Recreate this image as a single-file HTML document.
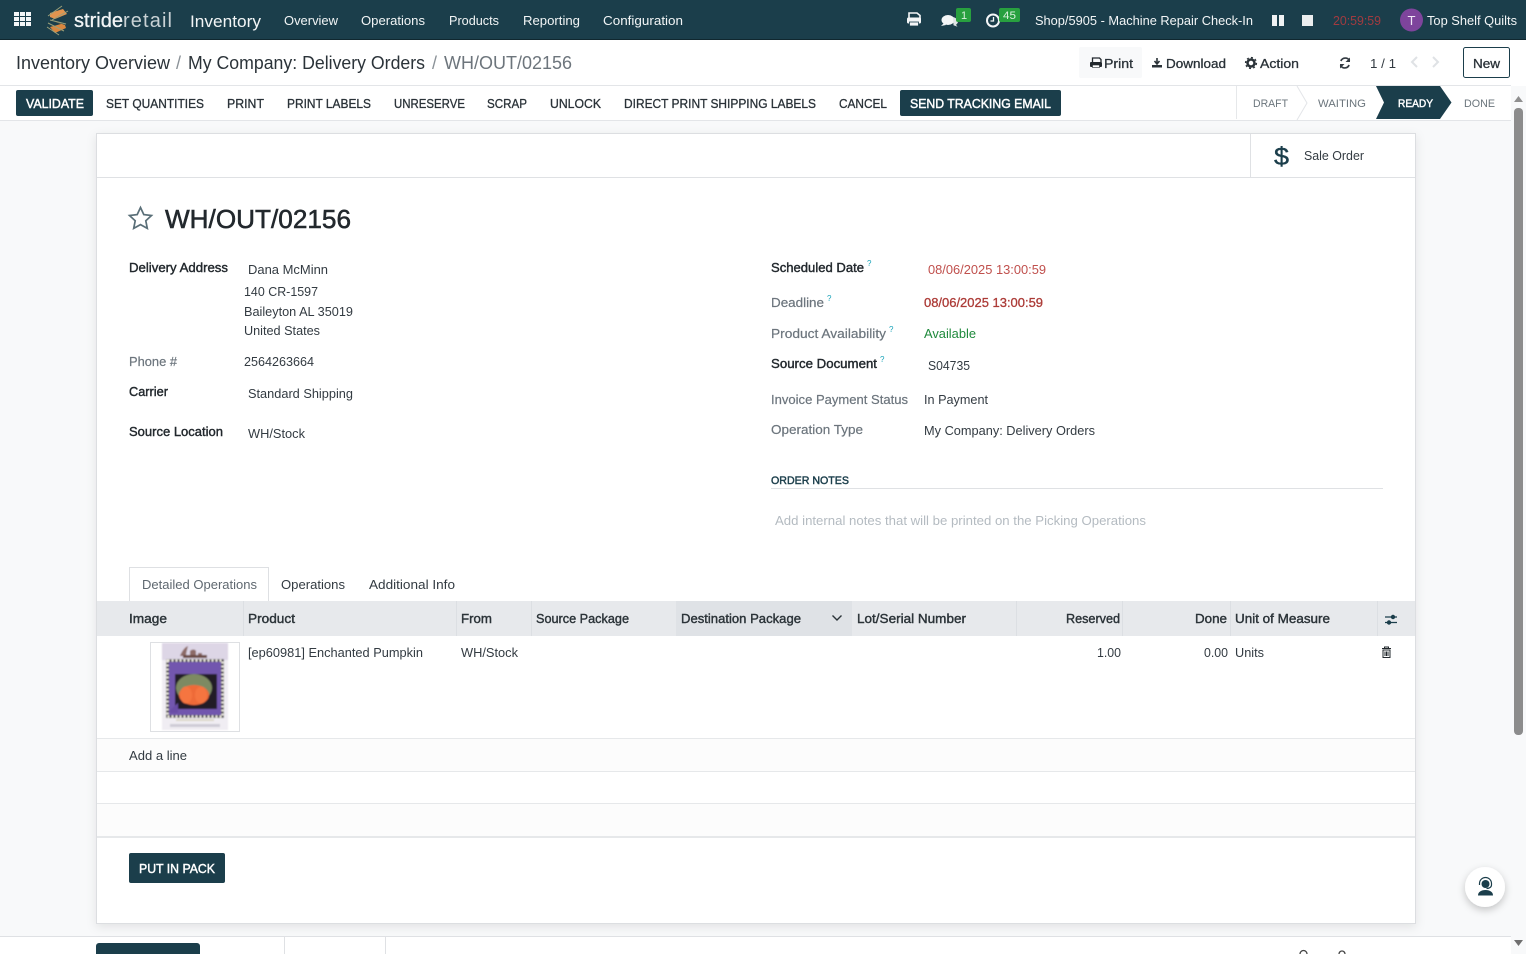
<!DOCTYPE html>
<html><head><meta charset="utf-8"><title>WH/OUT/02156</title>
<style>
html,body{margin:0;padding:0;width:1526px;height:954px;overflow:hidden;background:#f8f9fa}
svg{display:block;position:absolute;left:0;top:0}
text{font-family:"Liberation Sans",sans-serif;font-size:13px;fill:#333b42;white-space:pre}
.n{fill:#f2f5f6}
.b{fill:#22282d;stroke:#22282d;stroke-width:.4px}
.g{fill:#6c757d;stroke:#6c757d;stroke-width:.2px}
.a{fill:#2a3238;stroke:#2a3238;stroke-width:.3px}
.w{fill:#fff;stroke:#fff;stroke-width:.45px}
.h{fill:#2b3338;stroke:#2b3338;stroke-width:.4px}
.s{font-size:11px;fill:#6b757c}
.q{font-size:8px;fill:#17a2b8}
.c{font-size:18px;fill:#2b3339}
</style></head><body>
<svg width="1526" height="954" viewBox="0 0 1526 954" xmlns="http://www.w3.org/2000/svg">
<defs><filter id="sh" x="-30%" y="-30%" width="160%" height="170%"><feDropShadow dx="0" dy="3" stdDeviation="4" flood-color="#000" flood-opacity=".22"/></filter>
<filter id="sh2" x="-2%" y="-2%" width="104%" height="104%"><feDropShadow dx="0" dy="3" stdDeviation="5" flood-color="#000" flood-opacity=".09"/></filter>
<filter id="bl" x="-5%" y="-5%" width="110%" height="110%"><feGaussianBlur stdDeviation=".7"/></filter></defs>
<rect width="1526" height="954" fill="#f8f9fa"/>

<!-- navbar -->
<rect width="1526" height="39" fill="#1b3e4b"/><rect y="39" width="1526" height="1" fill="#10272f"/>
<g fill="#f4f6f7"><rect x="14" y="12" width="5" height="4"/><rect x="20" y="12" width="5" height="4"/><rect x="26" y="12" width="5" height="4"/><rect x="14" y="17" width="5" height="4"/><rect x="20" y="17" width="5" height="4"/><rect x="26" y="17" width="5" height="4"/><rect x="14" y="22" width="5" height="4"/><rect x="20" y="22" width="5" height="4"/><rect x="26" y="22" width="5" height="4"/></g>
<path d="M50 13 L63 9 L67 14 L55 19 L50 17Z" fill="#e2944f"/><path d="M53 21 L65 25 L66 28 L55 33 L50 27 L61 24Z" fill="#d9873f"/>
<path d="M48 16 L62 6 M52 20 L68 11 M48 23 L64 31 M47 27 L59 35 M50 20 L66 24" stroke="#9aa07a" stroke-width="1" fill="none"/>
<text x="74" y="27" class="n" style="font-size:20px;stroke:#f2f5f6;stroke-width:.3px" textLength="49" lengthAdjust="spacing">stride</text>
<text x="123" y="27" style="font-size:20px;fill:#c9d2d5" textLength="49" lengthAdjust="spacing">retail</text>
<text x="190" y="27" class="n" style="font-size:17px" textLength="71" lengthAdjust="spacingAndGlyphs">Inventory</text>
<text x="284" y="25" class="n" textLength="54" lengthAdjust="spacingAndGlyphs">Overview</text>
<text x="361" y="25" class="n" textLength="64" lengthAdjust="spacingAndGlyphs">Operations</text>
<text x="449" y="25" class="n" textLength="50" lengthAdjust="spacingAndGlyphs">Products</text>
<text x="523" y="25" class="n" textLength="57" lengthAdjust="spacingAndGlyphs">Reporting</text>
<text x="603" y="25" class="n" textLength="80" lengthAdjust="spacingAndGlyphs">Configuration</text>
<!-- printer -->
<g fill="#f4f6f7"><path d="M909 13h8l3 2.500v3h-11z" fill="none" stroke="#f4f6f7" stroke-width="1.600"/><rect x="907" y="17.500" width="14" height="6" rx="1.500"/><rect x="909.500" y="22" width="9" height="4" fill="#f4f6f7" stroke="#1b3e4b" stroke-width=".8"/></g>
<!-- chat -->
<ellipse cx="948" cy="20" rx="6.500" ry="5" fill="#f4f6f7"/><path d="M944 23l-3 3 5-1z" fill="#f4f6f7"/><path d="M953 17c3 .8 5 2.500 5 4.500 0 1.500-1 2.500-2 3.200l1.500 2-4-1.500" fill="#dfe4e6"/>
<rect x="956" y="8" width="15" height="14" rx="2" fill="#28a03f"/><text x="961" y="19" style="font-size:11px;fill:#d8f0dc">1</text>
<!-- clock -->
<circle cx="993" cy="20.500" r="6" fill="none" stroke="#f4f6f7" stroke-width="2"/><path d="M993.500 17v4h-3" fill="none" stroke="#f4f6f7" stroke-width="1.300"/>
<rect x="999" y="8" width="21" height="14" rx="2" fill="#28a03f"/><text x="1003" y="19" style="font-size:11px;fill:#d8f0dc" textLength="13" lengthAdjust="spacingAndGlyphs">45</text>
<text x="1035" y="25" class="n" textLength="218" lengthAdjust="spacingAndGlyphs">Shop/5905 - Machine Repair Check-In</text>
<rect x="1272" y="15" width="5" height="11" fill="#f0f2f3"/><rect x="1279" y="15" width="5" height="11" fill="#f0f2f3"/>
<rect x="1302" y="15" width="11" height="11" fill="#ebeeef"/>
<text x="1333" y="25" style="fill:#a13b40" textLength="48" lengthAdjust="spacingAndGlyphs">20:59:59</text>
<circle cx="1411.500" cy="20" r="11.500" fill="#7e449c"/><text x="1407.500" y="25" style="font-size:13px;fill:#f0e6f5" textLength="8" lengthAdjust="spacingAndGlyphs">T</text>
<text x="1427" y="25" class="n" textLength="90" lengthAdjust="spacingAndGlyphs">Top Shelf Quilts</text>

<!-- control panel -->
<rect y="40" width="1526" height="81" fill="#fff"/>
<rect y="85" width="1511" height="1" fill="#e3e5e8"/><rect y="120" width="1511" height="1" fill="#e3e5e8"/>
<text x="16" y="69" class="c" textLength="154" lengthAdjust="spacingAndGlyphs">Inventory Overview</text>
<text x="176" y="69" class="c" style="fill:#8b9298">/</text>
<text x="188" y="69" class="c" textLength="237" lengthAdjust="spacingAndGlyphs">My Company: Delivery Orders</text>
<text x="432" y="69" class="c" style="fill:#8b9298">/</text>
<text x="444" y="69" class="c" style="fill:#6d757c" textLength="128" lengthAdjust="spacingAndGlyphs">WH/OUT/02156</text>
<rect x="1079" y="47" width="63" height="31" rx="2" fill="#f8f9fa"/>
<path d="M1092.500 62v-4h7l1.500 1.500v2.500" fill="none" stroke="#22282d" stroke-width="1.300"/><rect x="1090" y="62" width="12" height="5" rx="1" fill="#22282d"/><rect x="1092.500" y="65" width="7" height="2.500" fill="#fff" stroke="#22282d" stroke-width=".6"/>
<text x="1104" y="68" class="a" textLength="29" lengthAdjust="spacingAndGlyphs">Print</text>
<path d="M1157 58v5M1154.500 61l2.500 3 2.500-3" stroke="#2a3238" stroke-width="1.600" fill="none"/><rect x="1152" y="65" width="10" height="2.500" fill="#2a3238"/>
<text x="1166" y="68" class="a" textLength="60" lengthAdjust="spacingAndGlyphs">Download</text>
<circle cx="1251" cy="63" r="3.500" fill="none" stroke="#2a3238" stroke-width="2.500"/><circle cx="1251" cy="63" r="5.400" fill="none" stroke="#2a3238" stroke-width="1.400" stroke-dasharray="2 2.200"/>
<text x="1260" y="68" class="a" textLength="39" lengthAdjust="spacingAndGlyphs">Action</text>
<path d="M1349.500 60.500a4.800 4.800 0 0 0-8.600 .5M1340.500 65.500a4.800 4.800 0 0 0 8.600 -.5" fill="none" stroke="#333b42" stroke-width="1.700"/><path d="M1350 57.500v4.500h-4.500zM1340 68.500v-4.500h4.500z" fill="#333b42"/>
<text x="1370" y="68" textLength="26" lengthAdjust="spacingAndGlyphs">1 / 1</text>
<path d="M1417 57l-5 5 5 5" fill="none" stroke="#dfe2e5" stroke-width="2"/><path d="M1433 57l5 5-5 5" fill="none" stroke="#dfe2e5" stroke-width="2"/>
<rect x="1463.500" y="47.500" width="46" height="30" rx="2" fill="#fff" stroke="#1b3e4b"/>
<text x="1473" y="68" class="a" textLength="27" lengthAdjust="spacingAndGlyphs">New</text>

<!-- action bar -->
<rect x="16" y="90" width="77" height="26" rx="2" fill="#1b3e4b"/>
<text x="26" y="108" class="w" textLength="58" lengthAdjust="spacingAndGlyphs">VALIDATE</text>
<text x="106" y="108" class="a" textLength="98" lengthAdjust="spacingAndGlyphs">SET QUANTITIES</text>
<text x="227" y="108" class="a" textLength="37" lengthAdjust="spacingAndGlyphs">PRINT</text>
<text x="287" y="108" class="a" textLength="84" lengthAdjust="spacingAndGlyphs">PRINT LABELS</text>
<text x="394" y="108" class="a" textLength="71" lengthAdjust="spacingAndGlyphs">UNRESERVE</text>
<text x="487" y="108" class="a" textLength="40" lengthAdjust="spacingAndGlyphs">SCRAP</text>
<text x="550" y="108" class="a" textLength="51" lengthAdjust="spacingAndGlyphs">UNLOCK</text>
<text x="624" y="108" class="a" textLength="192" lengthAdjust="spacingAndGlyphs">DIRECT PRINT SHIPPING LABELS</text>
<text x="839" y="108" class="a" textLength="48" lengthAdjust="spacingAndGlyphs">CANCEL</text>
<rect x="900" y="90" width="161" height="26" rx="2" fill="#1b3e4b"/>
<text x="910" y="108" class="w" textLength="141" lengthAdjust="spacingAndGlyphs">SEND TRACKING EMAIL</text>
<rect x="1236" y="86" width="1" height="33" fill="#e6e8ea"/>
<path d="M1297 86l10 17-10 17" fill="none" stroke="#e3e5e8"/>
<text x="1253" y="107" class="s" textLength="35" lengthAdjust="spacingAndGlyphs">DRAFT</text>
<text x="1318" y="107" class="s" textLength="48" lengthAdjust="spacingAndGlyphs">WAITING</text>
<path d="M1376 86h64l11.500 16.500-11.500 16.500h-64l8-16.500z" fill="#1b3e4b"/>
<text x="1398" y="107" class="w" style="font-size:11px" textLength="35" lengthAdjust="spacingAndGlyphs">READY</text>
<text x="1464" y="107" class="s" textLength="31" lengthAdjust="spacingAndGlyphs">DONE</text>

<!-- scrollbar -->
<rect x="1511" y="86" width="15" height="868" fill="#f8f9fa"/>
<path d="M1514 102l4.500-6 4.500 6z" fill="#8f8f8f"/><rect x="1514" y="108" width="9" height="627" rx="4" fill="#8c8c8c"/>

<!-- sheet -->
<rect x="96.500" y="133.500" width="1319" height="790" fill="#fff" stroke="#dcdee1" filter="url(#sh2)"/>
<rect x="97" y="177" width="1318" height="1" fill="#dfe1e4"/><rect x="1250" y="134" width="1" height="43" fill="#dfe1e4"/>
<text x="1274" y="165" style="font-size:25px;fill:#1b3e4b;stroke:#1b3e4b;stroke-width:.4px" textLength="15" lengthAdjust="spacingAndGlyphs">$</text>
<text x="1304" y="160" textLength="60" lengthAdjust="spacingAndGlyphs">Sale Order</text>

<path d="M140.500 207.500l3.300 7.100 7.700 .9-5.700 5.300 1.500 7.600-6.800-3.800-6.800 3.800 1.500-7.600-5.700-5.300 7.700-.9z" fill="none" stroke="#5a6f78" stroke-width="1.700"/>
<text x="165" y="228" style="font-size:26px;fill:#22282d;stroke:#22282d;stroke-width:.55px" textLength="186" lengthAdjust="spacingAndGlyphs">WH/OUT/02156</text>

<text x="129" y="272" class="b" textLength="99" lengthAdjust="spacingAndGlyphs">Delivery Address</text>
<text x="248" y="274" textLength="80" lengthAdjust="spacingAndGlyphs">Dana McMinn</text>
<text x="244" y="296" textLength="74" lengthAdjust="spacingAndGlyphs">140 CR-1597</text>
<text x="244" y="316" textLength="109" lengthAdjust="spacingAndGlyphs">Baileyton AL 35019</text>
<text x="244" y="335" textLength="76" lengthAdjust="spacingAndGlyphs">United States</text>
<text x="129" y="366" class="g" textLength="48" lengthAdjust="spacingAndGlyphs">Phone #</text>
<text x="244" y="366" textLength="70" lengthAdjust="spacingAndGlyphs">2564263664</text>
<text x="129" y="396" class="b" textLength="39" lengthAdjust="spacingAndGlyphs">Carrier</text>
<text x="248" y="398" textLength="105" lengthAdjust="spacingAndGlyphs">Standard Shipping</text>
<text x="129" y="436" class="b" textLength="94" lengthAdjust="spacingAndGlyphs">Source Location</text>
<text x="248" y="438" textLength="57" lengthAdjust="spacingAndGlyphs">WH/Stock</text>

<text x="771" y="272" class="b" textLength="93" lengthAdjust="spacingAndGlyphs">Scheduled Date</text><text x="867" y="266" class="q">?</text>
<text x="928" y="274" style="fill:#c0504d" textLength="118" lengthAdjust="spacingAndGlyphs">08/06/2025 13:00:59</text>
<text x="771" y="307" class="g" textLength="53" lengthAdjust="spacingAndGlyphs">Deadline</text><text x="827" y="301" class="q">?</text>
<text x="924" y="307" style="fill:#ac3b37;stroke:#ac3b37;stroke-width:.3px" textLength="119" lengthAdjust="spacingAndGlyphs">08/06/2025 13:00:59</text>
<text x="771" y="338" class="g" textLength="115" lengthAdjust="spacingAndGlyphs">Product Availability</text><text x="889" y="332" class="q">?</text>
<text x="924" y="338" style="fill:#1f8a3c" textLength="52" lengthAdjust="spacingAndGlyphs">Available</text>
<text x="771" y="368" class="b" textLength="106" lengthAdjust="spacingAndGlyphs">Source Document</text><text x="880" y="362" class="q">?</text>
<text x="928" y="370" textLength="42" lengthAdjust="spacingAndGlyphs">S04735</text>
<text x="771" y="404" class="g" textLength="137" lengthAdjust="spacingAndGlyphs">Invoice Payment Status</text>
<text x="924" y="404" textLength="64" lengthAdjust="spacingAndGlyphs">In Payment</text>
<text x="771" y="434" class="g" textLength="92" lengthAdjust="spacingAndGlyphs">Operation Type</text>
<text x="924" y="435" textLength="171" lengthAdjust="spacingAndGlyphs">My Company: Delivery Orders</text>
<text x="771" y="484" style="font-size:11px;fill:#1b3e4b;stroke:#1b3e4b;stroke-width:.45px" textLength="78" lengthAdjust="spacingAndGlyphs">ORDER NOTES</text>
<rect x="771" y="488" width="612" height="1" fill="#dfe1e4"/>
<text x="775" y="525" style="fill:#b4bbc1" textLength="371" lengthAdjust="spacingAndGlyphs">Add internal notes that will be printed on the Picking Operations</text>

<!-- tabs -->
<path d="M129.500 601v-33.500h139v33.500" fill="#fff" stroke="#dee0e3"/>
<text x="142" y="589" style="fill:#5f6870" textLength="115" lengthAdjust="spacingAndGlyphs">Detailed Operations</text>
<text x="281" y="589" textLength="64" lengthAdjust="spacingAndGlyphs">Operations</text>
<text x="369" y="589" textLength="86" lengthAdjust="spacingAndGlyphs">Additional Info</text>

<!-- table -->
<rect x="97" y="601" width="1318" height="35" fill="#e7e9ec"/>
<rect x="676" y="601" width="176" height="35" fill="#dfe2e6"/>
<g fill="#dcdfe3"><rect x="243" y="601" width="1" height="35"/><rect x="456" y="601" width="1" height="35"/><rect x="531" y="601" width="1" height="35"/><rect x="1016" y="601" width="1" height="35"/><rect x="1122" y="601" width="1" height="35"/><rect x="1230" y="601" width="1" height="35"/><rect x="1377" y="601" width="1" height="35"/></g>
<text x="129" y="623" class="h" textLength="38" lengthAdjust="spacingAndGlyphs">Image</text>
<text x="248" y="623" class="h" textLength="47" lengthAdjust="spacingAndGlyphs">Product</text>
<text x="461" y="623" class="h" textLength="31" lengthAdjust="spacingAndGlyphs">From</text>
<text x="536" y="623" class="h" textLength="93" lengthAdjust="spacingAndGlyphs">Source Package</text>
<text x="681" y="623" class="h" textLength="120" lengthAdjust="spacingAndGlyphs">Destination Package</text>
<path d="M832.500 615.500l4.500 4.500 4.500-4.500" fill="none" stroke="#2b3338" stroke-width="1.400"/>
<text x="857" y="623" class="h" textLength="109" lengthAdjust="spacingAndGlyphs">Lot/Serial Number</text>
<text x="1066" y="623" class="h" textLength="54" lengthAdjust="spacingAndGlyphs">Reserved</text>
<text x="1195" y="623" class="h" textLength="32" lengthAdjust="spacingAndGlyphs">Done</text>
<text x="1235" y="623" class="h" textLength="95" lengthAdjust="spacingAndGlyphs">Unit of Measure</text>
<path d="M1385 617h12M1385 622.500h12" stroke="#1b3e4b" stroke-width="1.200"/><circle cx="1393" cy="617" r="2.200" fill="#1b3e4b"/><circle cx="1389" cy="622.500" r="2.200" fill="#1b3e4b"/>

<!-- product image -->
<rect x="150.500" y="642.500" width="89" height="89" fill="#fff" stroke="#dee0e3"/>
<g filter="url(#bl)">
<rect x="162" y="643" width="66" height="87" fill="#f0edf3"/>
<rect x="162" y="643" width="66" height="17" fill="#ddd6e6"/>
<path d="M180 656c2-5 5-9 8-10-1 4-2 7-2 10M190 651c2-2 5-2 6 0v5h-6zM198 653h4v3h-4z" fill="#8c6a66"/>
<rect x="183" y="655" width="24" height="3" fill="#6b4a42"/>
<rect x="168" y="661" width="54" height="55" fill="#7256ae"/>
<rect x="175" y="674" width="42" height="35" fill="#211d28"/>
<path d="M170 710l8-7v10h-8z" fill="#6a4ea6"/>
<rect x="167.500" y="660.500" width="55" height="56" fill="none" stroke="#1c1a22" stroke-width="2.500"/>
<rect x="167.500" y="660.500" width="55" height="56" fill="none" stroke="#efece0" stroke-width="2.500" stroke-dasharray="2 2"/>
<ellipse cx="194" cy="688" rx="18" ry="14" fill="#7d8a62"/>
<ellipse cx="194" cy="695" rx="15" ry="10" fill="#ee6a38"/><ellipse cx="186" cy="695" rx="6" ry="8.500" fill="#f5743f"/><ellipse cx="201" cy="695" rx="6" ry="8.500" fill="#f5743f"/>
<rect x="176" y="719" width="38" height="2" fill="#ddd8c8"/>
<rect x="170" y="724" width="50" height="3" fill="#cfccd6"/>
</g>

<text x="248" y="657" textLength="175" lengthAdjust="spacingAndGlyphs">[ep60981] Enchanted Pumpkin</text>
<text x="461" y="657" textLength="57" lengthAdjust="spacingAndGlyphs">WH/Stock</text>
<text x="1097" y="657" textLength="24" lengthAdjust="spacingAndGlyphs">1.00</text>
<text x="1204" y="657" textLength="24" lengthAdjust="spacingAndGlyphs">0.00</text>
<text x="1235" y="657" textLength="29" lengthAdjust="spacingAndGlyphs">Units</text>
<path d="M1382 648.500h9M1384.500 648.500v-1.500h4v1.500M1383 650v7.500h7v-7.500zM1385 651.500v4.500M1386.500 651.500v4.500M1388 651.500v4.500" fill="none" stroke="#22282d" stroke-width="1"/>

<rect x="97" y="738" width="1318" height="1" fill="#e6e8ea"/>
<rect x="97" y="739" width="1318" height="32" fill="#fcfcfc"/>
<rect x="97" y="771" width="1318" height="1" fill="#e6e8ea"/>
<rect x="97" y="803" width="1318" height="1" fill="#e6e8ea"/>
<rect x="97" y="804" width="1318" height="32" fill="#fcfcfc"/>
<rect x="97" y="836" width="1318" height="2" fill="#e6e8ea"/>
<text x="129" y="760" textLength="58" lengthAdjust="spacingAndGlyphs">Add a line</text>

<rect x="129" y="853" width="96" height="30" rx="2" fill="#1b3e4b"/>
<text x="139" y="873" class="w" textLength="76" lengthAdjust="spacingAndGlyphs">PUT IN PACK</text>

<!-- floating -->
<circle cx="1485" cy="887" r="20" fill="#fff" filter="url(#sh)"/>
<circle cx="1485.500" cy="884" r="4" fill="#1b3e4b"/><path d="M1479.500 885v-1.500a6 6 0 0 1 12 0v1.500M1491.500 885c0 2-2 3.500-5 3.500" fill="none" stroke="#1b3e4b" stroke-width="1.200"/><path d="M1478 895.500c0-3.500 3-5.500 7.500-5.500s7.500 2 7.500 5.500z" fill="#1b3e4b"/>

<!-- chatter -->
<rect y="937" width="1511" height="17" fill="#fff"/><rect y="936" width="1511" height="1" fill="#dfe1e4"/>
<path d="M96 954v-8a3 3 0 0 1 3-3h98a3 3 0 0 1 3 3v8z" fill="#1b3e4b"/>
<rect x="284" y="937" width="1" height="17" fill="#dfe1e4"/><rect x="385" y="937" width="1" height="17" fill="#dfe1e4"/>
<path d="M1300 954a3.500 3.500 0 0 1 7 0M1339 954a3 3 0 0 1 6 0" fill="none" stroke="#444" stroke-width="1.300"/>
<rect x="1511" y="937" width="15" height="17" fill="#f8f9fa"/><path d="M1514 940l4.500 6 4.500-6z" fill="#6f6f6f"/>
</svg>
</body></html>
